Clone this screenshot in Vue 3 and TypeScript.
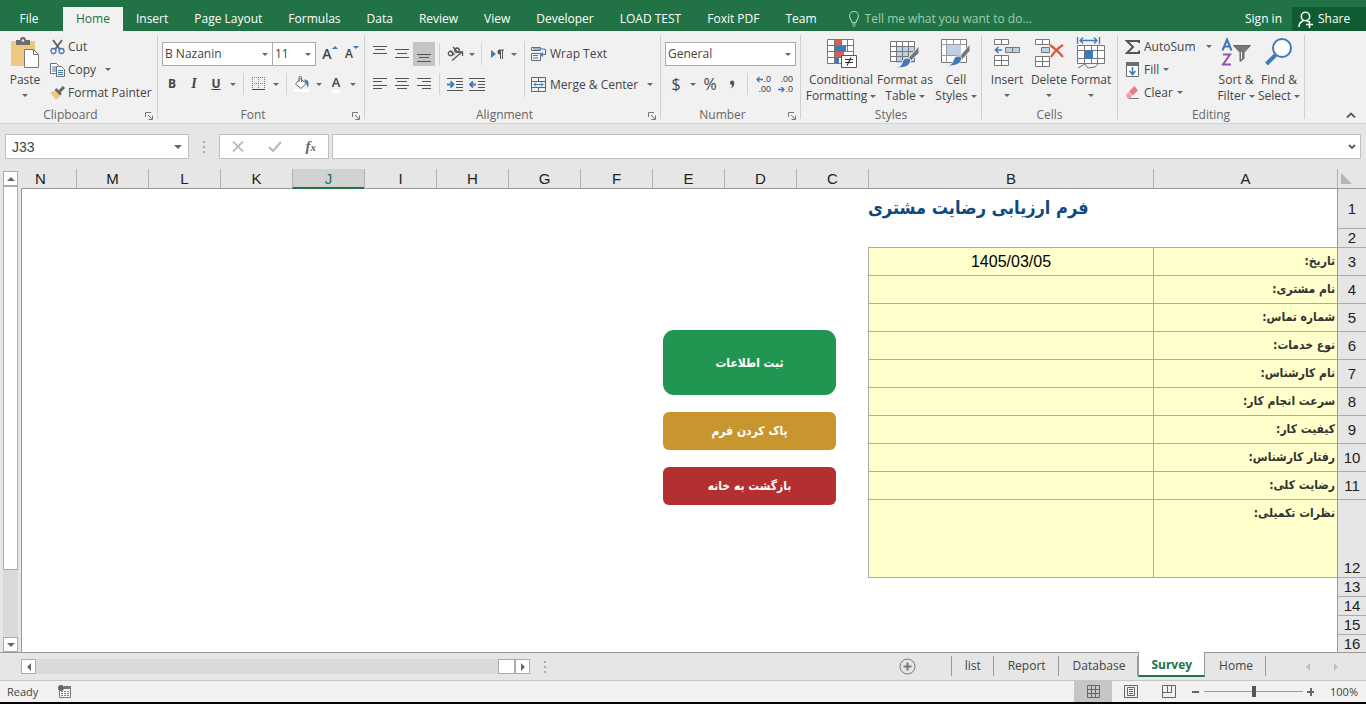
<script setup lang="ts">
import { ref } from 'vue'

const ribbonTabs = ['Home', 'Insert', 'Page Layout', 'Formulas', 'Data', 'Review', 'View', 'Developer', 'LOAD TEST', 'Foxit PDF', 'Team']
const activeTab = ref('Home')

const columns = ['A', 'B', 'C', 'D', 'E', 'F', 'G', 'H', 'I', 'J', 'K', 'L', 'M', 'N']
const emptyColumns = columns.slice(2)
const selectedColumn = ref('J')

interface FormRow {
  row: number
  label: string
  value: string
}

const formRows: FormRow[] = [
  { row: 3, label: 'تاریخ:', value: '1405/03/05' },
  { row: 4, label: 'نام مشتری:', value: '' },
  { row: 5, label: 'شماره تماس:', value: '' },
  { row: 6, label: 'نوع خدمات:', value: '' },
  { row: 7, label: 'نام کارشناس:', value: '' },
  { row: 8, label: 'سرعت انجام کار:', value: '' },
  { row: 9, label: 'کیفیت کار:', value: '' },
  { row: 10, label: 'رفتار کارشناس:', value: '' },
  { row: 11, label: 'رضایت کلی:', value: '' },
  { row: 12, label: 'نظرات تکمیلی:', value: '' },
]
const trailingRows = [13, 14, 15, 16]

const sheets = ['list', 'Report', 'Database', 'Survey', 'Home']
const activeSheet = ref('Survey')

const cellName = ref('J33')
const formula = ref('')
const zoom = ref(100)
</script>

<template>
  <div class="app">
    <header class="tabbar">
      <button class="file">File</button>
      <nav class="tabs">
        <button v-for="t in ribbonTabs" :key="t" class="tab" :class="{ active: t === activeTab }" @click="activeTab = t">{{ t }}</button>
      </nav>
      <label class="tell">
        <svg width="12" height="16" viewBox="0 0 12 16" fill="none" stroke="currentColor" stroke-width="1.2"><path d="M4 11.5C4 9 1.5 8 1.5 5a4.5 4.5 0 0 1 9 0C10.500 8 8 9 8 11.500zM4 13h4M4.500 15h3" /></svg>
        <input type="text" placeholder="Tell me what you want to do..." aria-label="Tell me what you want to do" />
      </label>
      <button class="signin">Sign in</button>
      <button class="share">
        <svg width="16" height="17" viewBox="0 0 16 17" fill="none" stroke="#fff" stroke-width="1.500"><circle cx="7.500" cy="5.500" r="4.200" /><path d="M1 16c0-3.500 2-5.500 4.500-6.500M9 9.800l1.500 1M8 13.500h7M11.500 10v7" /></svg>
        Share
      </button>
    </header>

    <section class="ribbon" aria-label="Ribbon">
      <div class="group g-clip">
        <div class="body">
          <button class="big paste">
            <svg width="30" height="32" viewBox="0 0 30 32"><path d="M1 4h24v25H1z" fill="#edc87e" /><path d="M6 3h4a3 3 0 0 1 6 0h4v5H6z" fill="#6d6d6d" /><circle cx="13" cy="3.500" r="1.300" fill="#f1f1f1" /><path d="M14.500 12.500h9l5 5v13h-14z" fill="#fff" stroke="#777" /><path d="M23.500 12.500v5h5" fill="none" stroke="#777" /></svg>
            <span>Paste</span><i class="caret"></i>
          </button>
          <div class="stack">
            <button class="line">
              <svg width="15" height="16" viewBox="0 0 15 16" fill="none"><path d="M3 1l7 9.500M12 1L5 10.500" stroke="#666" stroke-width="2" /><circle cx="3.500" cy="12" r="2.500" stroke="#3f79b8" stroke-width="1.300" /><circle cx="11.500" cy="12" r="2.500" stroke="#3f79b8" stroke-width="1.300" /></svg>
              Cut
            </button>
            <button class="line">
              <svg width="15" height="14" viewBox="0 0 15 14"><path d="M.5.5h6l2 2v8h-8z" fill="#fff" stroke="#6d6d6d" /><path d="M2 4h4M2 6h4M2 8h4" stroke="#3f79b8" /><path d="M6.500 3.500h5l3 3v7h-8z" fill="#fff" stroke="#6d6d6d" /><path d="M8 7.500h5M8 9.500h5M8 11.500h5" stroke="#3f79b8" /></svg>
              Copy <i class="caret far"></i>
            </button>
            <button class="line">
              <svg width="15" height="14" viewBox="0 0 15 14"><path d="M0 6.500l5.500-2 5 5L6 14z" fill="#edc87e" /><path d="M5.500 3l5.500 5.500" stroke="#666" stroke-width="2.500" /><path d="M9.500 5.500L14 1" stroke="#666" stroke-width="3" /></svg>
              Format Painter
            </button>
          </div>
        </div>
        <footer>Clipboard<button class="launch" aria-label="Clipboard settings"><svg width="8" height="8" viewBox="0 0 8 8" fill="none" stroke="#777"><path d="M.5 5V.5H6M3 3l4 4M7.500 3.500v4h-4" /></svg></button></footer>
      </div>

      <div class="group g-font">
        <div class="body rows">
          <div class="row">
            <span class="pick name"><select aria-label="Font"><option>B Nazanin</option></select><i class="caret"></i></span>
            <span class="pick size"><select aria-label="Font size"><option>11</option></select><i class="caret"></i></span>
            <button class="tool grow first" aria-label="Increase font size"><b class="a-lg">A</b><i class="up"></i></button>
            <button class="tool grow" aria-label="Decrease font size"><b class="a-sm">A</b><i class="up down"></i></button>
          </div>
          <div class="row">
            <button class="tool"><b>B</b></button>
            <button class="tool serif"><b><em>I</em></b></button>
            <button class="tool"><b><u>U</u></b></button>
            <button class="drop" aria-label="Underline options"><i class="caret"></i></button>
            <i class="sep"></i>
            <button class="tool" aria-label="Borders"><svg width="14" height="14" viewBox="0 0 14 14" fill="none" stroke="#777"><path d="M0 .5h13M0 6.500h13M.5 0v12M6.500 0v12M12.500 0v12" stroke-dasharray="1 1" /><path d="M0 12.500h13" stroke="#444" /></svg></button>
            <button class="drop" aria-label="Border options"><i class="caret"></i></button>
            <i class="sep"></i>
            <button class="tool" aria-label="Fill color"><svg width="16" height="16" viewBox="0 0 16 16"><path d="M6.500 2.500l5.500 5-5 5-5.500-4.500z" fill="#fff" stroke="#666" /><path d="M5 6V1.500a1.200 1.200 0 0 1 2.500 0V6" fill="none" stroke="#666" /><path d="M10 3.500c4.500 0 5.500 3 4 8-1-1-1-3-2-4z" fill="#3f79b8" /><path d="M0 13h15v3H0z" fill="#fff" /></svg></button>
            <button class="drop" aria-label="Fill options"><i class="caret"></i></button>
            <button class="tool fontcolor" aria-label="Font color"><b>A</b></button>
            <button class="drop" aria-label="Font color options"><i class="caret"></i></button>
          </div>
        </div>
        <footer>Font<button class="launch" aria-label="Font settings"><svg width="8" height="8" viewBox="0 0 8 8" fill="none" stroke="#777"><path d="M.5 5V.5H6M3 3l4 4M7.500 3.500v4h-4" /></svg></button></footer>
      </div>

      <div class="group g-align">
        <div class="body">
          <div class="rows">
            <div class="row">
              <button class="tool" aria-label="Top align"><svg width="14" height="16" viewBox="0 0 14 16" stroke="#555"><path d="M0 .5h14M2 3.500h10M0 7.500h14" /></svg></button>
              <button class="tool" aria-label="Middle align"><svg width="14" height="16" viewBox="0 0 14 16" stroke="#555"><path d="M0 3.500h14M2 7.500h10M0 11.500h14" /></svg></button>
              <button class="tool on" aria-label="Bottom align"><svg width="14" height="16" viewBox="0 0 14 16" stroke="#555"><path d="M0 8.500h14M2 11.500h10M0 15.500h14" /></svg></button>
              <i class="sep"></i>
              <button class="tool" aria-label="Orientation"><svg width="17" height="16" viewBox="0 0 17 16" fill="none" stroke="#555" stroke-width="1.300"><circle cx="3.500" cy="7.500" r="2.200" /><path d="M3.500 4.500l4 4.500M6 1l5 5.500" /><circle cx="10" cy="4.200" r="2.200" /><path d="M5 14.500L15 6M11 6h4.500v4" /></svg></button>
              <button class="drop" aria-label="Orientation options"><i class="caret"></i></button>
              <i class="sep"></i>
              <button class="tool" aria-label="Text direction"><svg width="13" height="10" viewBox="0 0 13 10"><path d="M0 1l5 4-5 4z" fill="#3f79b8" /><path d="M9 1h4M9.500 1v9M11.500 1v9" stroke="#555" /><path d="M9 .5a2.500 2.500 0 0 0 0 5z" fill="#555" /></svg></button>
              <button class="drop" aria-label="Text direction options"><i class="caret"></i></button>
            </div>
            <div class="row">
              <button class="tool" aria-label="Align left"><svg width="14" height="12" viewBox="0 0 14 12" stroke="#555"><path d="M0 .5h14M0 3.500h9M0 7.500h14M0 10.500h9" /></svg></button>
              <button class="tool" aria-label="Center"><svg width="14" height="12" viewBox="0 0 14 12" stroke="#555"><path d="M0 .5h14M2 3.500h10M0 7.500h14M2 10.500h10" /></svg></button>
              <button class="tool" aria-label="Align right"><svg width="14" height="12" viewBox="0 0 14 12" stroke="#555"><path d="M0 .5h14M5 3.500h9M0 7.500h14M5 10.500h9" /></svg></button>
              <i class="sep"></i>
              <button class="tool" aria-label="Decrease indent"><svg width="16" height="13" viewBox="0 0 16 13" stroke="#555"><path d="M0 .5h16M9 3.500h7M9 6.500h7M9 9.500h7M0 12.500h16" /><path d="M0 6.500h6M3.500 3.500l3 3-3 3" fill="none" stroke="#3f79b8" stroke-width="1.800" /></svg></button>
              <button class="tool" aria-label="Increase indent"><svg width="16" height="13" viewBox="0 0 16 13" stroke="#555"><path d="M0 .5h16M9 3.500h7M9 6.500h7M9 9.500h7M0 12.500h16" /><path d="M1.500 6.500H7M4 3.500l-3 3 3 3" fill="none" stroke="#3f79b8" stroke-width="1.800" /></svg></button>
            </div>
          </div>
          <i class="sep tall"></i>
          <div class="rows wraps">
            <button class="line"><svg width="16" height="16" viewBox="0 0 16 16" fill="none"><path d="M.5 1.500h9v3h-9zM.5 7.500h9v7h-9z" stroke="#6d6d6d" /><path d="M2 3h12M2 9.500h5M2 12h5M14.500 3v5.500H10M12 6.500l-2 2 2 2" stroke="#3f79b8" stroke-width="1.200" /></svg>Wrap Text</button>
            <button class="line"><svg width="16" height="16" viewBox="0 0 16 16" fill="none"><path d="M.5.5h14v14H.5zM.5 4.500h14M.5 10.500h14M7.500.5v4M7.500 10.500v4" stroke="#666" /><path d="M3 7.500h9M5 5.500l-2 2 2 2M10 5.500l2 2-2 2" stroke="#3f79b8" /></svg>Merge &amp; Center <i class="caret far"></i></button>
          </div>
        </div>
        <footer>Alignment<button class="launch" aria-label="Alignment settings"><svg width="8" height="8" viewBox="0 0 8 8" fill="none" stroke="#777"><path d="M.5 5V.5H6M3 3l4 4M7.500 3.500v4h-4" /></svg></button></footer>
      </div>

      <div class="group g-num">
        <div class="body rows">
          <div class="row">
            <span class="pick format"><select aria-label="Number format"><option>General</option></select><i class="caret"></i></span>
          </div>
          <div class="row">
            <button class="tool sym">$</button>
            <button class="drop" aria-label="Currency options"><i class="caret"></i></button>
            <button class="tool sym">%</button>
            <button class="tool sym comma" aria-label="Comma style"><svg width="6" height="9" viewBox="0 0 6 9"><path d="M1 8.500C3 7.500 3 6 3 5a2.200 2.200 0 1 1 2.300-2.500C5.500 5.500 4 8 1 8.500z" fill="#555" /></svg></button>
            <i class="sep"></i>
            <button class="tool dec" aria-label="Increase decimal"><span><svg width="7" height="7" viewBox="0 0 7 7" fill="none" stroke="#3f79b8" stroke-width="1.300"><path d="M7 3.500H1M3.500 1L1 3.500 3.500 6" /></svg>.0</span><span>.00</span></button>
            <button class="tool dec" aria-label="Decrease decimal"><span>.00</span><span><svg width="7" height="7" viewBox="0 0 7 7" fill="none" stroke="#3f79b8" stroke-width="1.300"><path d="M0 3.500h6M3.500 1L6 3.500 3.500 6" /></svg>.0</span></button>
          </div>
        </div>
        <footer>Number<button class="launch" aria-label="Number settings"><svg width="8" height="8" viewBox="0 0 8 8" fill="none" stroke="#777"><path d="M.5 5V.5H6M3 3l4 4M7.500 3.500v4h-4" /></svg></button></footer>
      </div>

      <div class="group g-styles">
        <div class="body">
          <button class="big cond">
            <svg width="31" height="32" viewBox="0 0 31 32"><path d="M1.500 2.500h26v24h-26z" fill="#fff" /><path d="M9 2h6v6H9zM9 14h9v6H9z" fill="#d8604a" /><path d="M9 8h11v6H9zM9 20h4v6H9z" fill="#3f79b8" /><path d="M1.500 2.500h26v24h-26zM8.500 2.500v24M15.500 2.500v6M21.500 2.500v12M1.500 8.500h26M1.500 14.500h26M1.500 20.500h26" fill="none" stroke="#777" /><path d="M15.500 18.500h15v12h-15z" fill="#fff" stroke="#555" /><path d="M19 22.500h8M19 25.500h8M25 20.500l-4 8" stroke="#333" stroke-width="1.200" /></svg>
            <span>Conditional</span><span>Formatting<i class="caret"></i></span>
          </button>
          <button class="big fmt">
            <svg width="30" height="32" viewBox="0 0 30 32"><path d="M.5 4.500h24v21H.5z" fill="#fff" /><path d="M6 9h19v17H6z" fill="#bdd0e6" /><path d="M.5 4.500h24v20H.5zM6.500 4.500v20M12.500 4.500v20M18.500 4.500v20M.5 9.500h24M.5 14.500h24M.5 19.500h24" fill="none" stroke="#777" /><path d="M29 9v7l-8 8-3-3z" fill="#777" stroke="#f1f1f1" /><path d="M17 21c3 0 4.500 2 3 5-2 4-7 5-14 5 4-1.500 5-2 6-5s2-5 5-5z" fill="#3f79b8" stroke="#f1f1f1" /></svg>
            <span>Format as</span><span>Table<i class="caret"></i></span>
          </button>
          <button class="big cell">
            <svg width="30" height="32" viewBox="0 0 30 32"><path d="M.5 2.500h25v23H.5z" fill="#fff" stroke="#777" /><path d="M.5 7.500h25M.5 18.500h25M5.500 2.500v23M19.500 2.500v5M12.500 2.500v5" stroke="#999" /><path d="M6 8h14v10H6z" fill="#bdd0e6" /><path d="M29 7v7l-8 9-3-3z" fill="#777" stroke="#f1f1f1" /><path d="M17 19c3 0 4.500 2 3 5-2 4-7 5-14 5 4-1.500 5-2 6-5s2-5 5-5z" fill="#3f79b8" stroke="#f1f1f1" /></svg>
            <span>Cell</span><span>Styles<i class="caret"></i></span>
          </button>
        </div>
        <footer>Styles</footer>
      </div>

      <div class="group g-cells">
        <div class="body">
          <button class="big">
            <svg width="28" height="32" viewBox="0 0 28 32"><path d="M1.500 2.500h14v5h-14zM8.500 2.500v5M1.500 18.500h14v10h-14zM8.500 18.500v10M1.500 23.500h14" fill="#fff" stroke="#777" /><path d="M12.500 10.500h14v5h-14zM19.500 10.500v5" fill="#bdd0e6" stroke="#777" /><path d="M9 13H3M5.500 10L2.500 13l3 3" fill="none" stroke="#3f79b8" stroke-width="1.600" /></svg>
            <span>Insert</span><i class="caret"></i>
          </button>
          <button class="big">
            <svg width="30" height="32" viewBox="0 0 30 32"><path d="M1.500 2.500h14v5h-14zM8.500 2.500v5M1.500 19.500h14v10h-14zM8.500 19.500v10M1.500 24.500h14" fill="#fff" stroke="#777" /><path d="M7.500 10.500h8v5h-8z" fill="#bdd0e6" stroke="#777" /><path d="M16 8c4 3 9 7 13 12M29 8c-5 3-9 7-12 12" fill="none" stroke="#dc5a3c" stroke-width="2.200" /></svg>
            <span>Delete</span><i class="caret"></i>
          </button>
          <button class="big">
            <svg width="30" height="32" viewBox="0 0 30 32"><path d="M2.500 8.500h26v18h-26z" fill="#fff" /><path d="M1.500 8.500h27v18h-27zM8.500 8.500v18M15.500 8.500v18M21.500 8.500v18M1.500 13.500h27M1.500 21.500h27M2 31l7-4 3 4 7-1 3-3" fill="none" stroke="#777" /><path d="M9 13h8v9H9z" fill="#3f79b8" /><path d="M1.500 0v7M23.500 0v7M4 3.500h17M7 .5l-3 3 3 3M18 .5l3 3-3 3" fill="none" stroke="#3f79b8" stroke-width="1.300" /></svg>
            <span>Format</span><i class="caret"></i>
          </button>
        </div>
        <footer>Cells</footer>
      </div>

      <div class="group g-edit">
        <div class="body">
          <div class="stack">
            <button class="line"><svg width="15" height="16" viewBox="0 0 15 16" fill="none" stroke="#555" stroke-width="2"><path d="M14 4V2H2l6 6-6 6h12v-2.500" /></svg>AutoSum <i class="caret far"></i></button>
            <button class="line"><svg width="15" height="15" viewBox="0 0 15 15"><path d="M1.500.5h12v14h-12z" fill="#fff" stroke="#6d6d6d" /><path d="M1 0h13v4H1z" fill="#6d6d6d" /><path d="M7.500 5v7M4.500 9l3 3.500 3-3.500" fill="none" stroke="#3f79b8" stroke-width="1.600" /></svg>Fill<i class="caret"></i></button>
            <button class="line"><svg width="15" height="14" viewBox="0 0 15 14"><path d="M9.500 0L13 4.500 7.500 9.500 4 5.500z" fill="#e8788a" /><path d="M3.500 6L7 10l-2.500 2.500H2.500L1 9z" fill="#ee9aa8" /><path d="M4 12.500h10" stroke="#777" /></svg>Clear<i class="caret"></i></button>
          </div>
          <button class="big sort">
            <svg width="30" height="32" viewBox="0 0 30 32" fill="none"><path d="M1.500 13.500L6 2.500l4.500 11M3 9.500h6" stroke="#3f79b8" stroke-width="2" /><path d="M2 17.500h7L2 27.500h8" stroke="#9254b4" stroke-width="2" /><path d="M12.500 8.500h17l-6.500 7v6l-4 3v-9z" fill="#777" stroke="#666" /><path d="M20.500 15v7" stroke="#fff" /></svg>
            <span>Sort &amp;</span><span>Filter<i class="caret"></i></span>
          </button>
          <button class="big find">
            <svg width="28" height="32" viewBox="0 0 28 32"><path d="M1.500 27l9-9" stroke="#3f79b8" stroke-width="4" /><circle cx="17" cy="11" r="9" fill="#fff" stroke="#3f79b8" stroke-width="2" /></svg>
            <span>Find &amp;</span><span>Select<i class="caret"></i></span>
          </button>
        </div>
        <footer>Editing</footer>
      </div>
      <button class="collapse" aria-label="Collapse the ribbon"><svg width="10" height="6" viewBox="0 0 10 6" fill="none" stroke="#555" stroke-width="1.800"><path d="M1 5.500l4-4 4 4" /></svg></button>
    </section>

    <section class="formulabar">
      <div class="namebox"><input v-model="cellName" aria-label="Name box" /><button aria-label="Names"><i class="caret"></i></button></div>
      <i class="dots"></i>
      <div class="fxbox">
        <button aria-label="Cancel"><svg width="12" height="11" viewBox="0 0 12 11" stroke="#bbb" stroke-width="1.800"><path d="M1 .5l10 10M11 .5l-10 10" /></svg></button>
        <button aria-label="Enter"><svg width="14" height="11" viewBox="0 0 14 11" fill="none" stroke="#bbb" stroke-width="2.200"><path d="M1 6l4 4 8-9" /></svg></button>
        <button class="fx" aria-label="Insert function"><em>f</em><small>x</small></button>
      </div>
      <div class="formula"><input v-model="formula" aria-label="Formula" /><button aria-label="Expand formula bar"><svg width="8" height="6" viewBox="0 0 8 6" fill="none" stroke="#555" stroke-width="1.800"><path d="M1 1l3 3 3-3" /></svg></button></div>
    </section>

    <main class="work">
      <div class="vscroll">
        <button aria-label="Scroll up"><i class="arrow up-a"></i></button>
        <div class="thumb"></div>
        <div class="track"></div>
        <button aria-label="Scroll down"><i class="arrow down-a"></i></button>
      </div>
      <div class="sheet" dir="rtl">
        <table>
          <colgroup>
            <col class="c-num" /><col class="c-a" /><col class="c-b" /><col v-for="c in emptyColumns" :key="c" class="c-std" />
          </colgroup>
          <thead>
            <tr>
              <th class="corner"><i></i></th>
              <th v-for="c in columns" :key="c" :class="{ selected: c === selectedColumn }" @click="selectedColumn = c">{{ c }}</th>
            </tr>
          </thead>
          <tbody>
            <tr class="r1"><th>1</th><td></td><td class="title">فرم ارزیابی رضایت مشتری</td></tr>
            <tr class="r2"><th>2</th></tr>
            <tr v-for="r in formRows" :key="r.row" :class="r.row === 12 ? 'notes' : 'entry'">
              <th>{{ r.row }}</th>
              <td class="field label">{{ r.label }}</td>
              <td class="field value">{{ r.value }}</td>
            </tr>
            <tr v-for="n in trailingRows" :key="n" class="r2"><th>{{ n }}</th></tr>
          </tbody>
        </table>
        <div class="actions">
          <button class="save">ثبت اطلاعات</button>
          <button class="clear">پاک کردن فرم</button>
          <button class="home">بازگشت به خانه</button>
        </div>
      </div>
    </main>

    <div class="sheetbar">
      <div class="hscroll">
        <button aria-label="Scroll left"><i class="arrow left-a"></i></button>
        <div class="track"></div>
        <div class="thumb"></div>
        <button aria-label="Scroll right"><i class="arrow right-a"></i></button>
      </div>
      <i class="dots"></i>
      <button class="add" aria-label="New sheet"><svg width="17" height="17" viewBox="0 0 17 17" fill="none" stroke="#777"><circle cx="8.500" cy="8.500" r="7.500" /><path d="M4.500 8.500h8M8.500 4.500v8" stroke-width="2" /></svg></button>
      <nav class="sheets">
        <button v-for="s in sheets" :key="s" :class="{ active: s === activeSheet }" @click="activeSheet = s">{{ s }}</button>
      </nav>
      <div class="nav">
        <button aria-label="Previous sheets"><i class="arrow left-a"></i></button>
        <button aria-label="Next sheets"><i class="arrow right-a"></i></button>
      </div>
    </div>

    <footer class="status">
      <span>Ready</span>
      <button class="macro" aria-label="Record macro"><svg width="13" height="13" viewBox="0 0 13 13"><path d="M1.500 3.500h11v9h-11z" fill="#fff" stroke="#777" /><path d="M6 1h7v3H6z" fill="#777" /><path d="M3 6.500h8M3 8.500h8M3 10.500h8" stroke="#777" stroke-dasharray="2 1" /><circle cx="3" cy="3" r="3" fill="#666" /></svg></button>
      <div class="views">
        <button class="on" aria-label="Normal view"><svg width="13" height="13" viewBox="0 0 13 13" fill="none" stroke="#666"><path d="M.5.5h12v12H.5zM4.500.5v12M8.500.5v12M.5 4.500h12M.5 8.500h12" /></svg></button>
        <button aria-label="Page layout view"><svg width="14" height="13" viewBox="0 0 14 13" fill="none" stroke="#666"><path d="M.5.5h13v12H.5zM3.500 2.500h7v8h-7zM5 4.500h4M5 6.500h4M5 8.500h4" /></svg></button>
        <button aria-label="Page break view"><svg width="14" height="13" viewBox="0 0 14 13" fill="none" stroke="#666"><path d="M.5.500h13v12H.5zM.5 7.500h9v-7M5.500.5v7" /></svg></button>
      </div>
      <button class="pm" aria-label="Zoom out"><i class="minus"></i></button>
      <input v-model.number="zoom" class="zoom" type="range" min="0" max="200" aria-label="Zoom" />
      <button class="pm" aria-label="Zoom in"><i class="minus plus"></i></button>
      <span class="pct">{{ zoom }}%</span>
    </footer>
  </div>
</template>

<style>
html, body { margin: 0; background: #000; }
</style>

<style scoped>
* { box-sizing: border-box; }
.app {
  display: flex;
  flex-direction: column;
  height: 100vh;
  padding-bottom: 2px;
  overflow: hidden;
  font-family: "Open Sans", "Noto Sans", sans-serif;
  font-size: 12px;
  line-height: 16px;
  color: #444;
  background: #010103;
}
button, input, select { font: inherit; color: inherit; background: none; border: 0; padding: 0; margin: 0; border-radius: 0; outline: 0; }
button { white-space: nowrap; }
svg { display: block; flex: none; }

.tabbar { display: flex; align-items: flex-end; flex: none; height: 31px; background: #217346; color: #fff; }
.tabbar button { height: 24px; }
.file { width: 58px; }
.tabs { display: flex; margin-left: 5px; }
.tab { padding: 0 13px; }
.tab.active { background: #f1f1f1; color: #217346; }
.tell { display: flex; align-items: center; gap: 5px; height: 24px; margin-left: 18px; color: #9fcdb2; }
.tell input { width: 180px; }
.tell input::placeholder { color: #9fcdb2; opacity: 1; }
.signin { margin-left: auto; padding: 0 10px; }
.share { display: flex; align-items: center; gap: 4px; width: 74px; padding-left: 6px; background: #0e5c2f; }

.ribbon { display: flex; flex: none; height: 93px; background: #f1f1f1; border-bottom: 1px solid #d2d2d2; }
.group { position: relative; display: flex; flex-direction: column; flex: none; margin: 4px 0; border-right: 1px solid #d0d0d0; }
.body { display: flex; flex: 1; min-height: 0; }
.group footer { position: relative; height: 8px; line-height: 8px; text-align: center; color: #666; padding-right: 16px; }
.g-styles footer, .g-cells footer, .g-edit footer { padding-right: 0; }
.launch { position: absolute; right: 4px; top: 1px; }
.g-clip { width: 158px; }
.g-font { width: 207px; }
.g-align { width: 296px; }
.g-num { width: 140px; }
.g-styles { width: 181px; }
.g-cells { width: 136px; }
.g-edit { width: 187px; }
.big { display: flex; flex-direction: column; align-items: center; justify-content: flex-start; height: 74px; padding-top: 2px; }
.big svg { margin-bottom: 3px; }
.big > .caret { margin-top: 6px; }
.big span .caret { margin-left: 3px; }
.caret { display: inline-block; flex: none; width: 0; height: 0; border: 3px solid transparent; border-top-color: #666; border-bottom: 0; vertical-align: middle; }
.paste { width: 40px; margin-left: 5px; }
.stack { display: flex; flex-direction: column; margin-left: 5px; }
.line { display: flex; align-items: center; gap: 3px; height: 23px; }
.line .far { margin-left: 6px; }
.rows { display: flex; flex-direction: column; }
.row { display: flex; align-items: center; height: 24px; margin-top: 6px; }
.row:first-child { margin-top: 7px; }
.g-font .row, .g-num .row { padding-left: 4px; }
.g-font .row + .row { padding-left: 3px; }
.pick { display: grid; align-items: center; height: 24px; background: #fff; border: 1px solid #ababab; }
.pick select, .pick .caret { grid-area: 1 / 1; }
.pick select { appearance: none; width: 100%; padding-left: 2px; }
.pick .caret { justify-self: end; margin-right: 4px; pointer-events: none; }
.name { width: 111px; }
.size { width: 43px; border-left: 0; }
.format { width: 131px; }
.tool { display: flex; align-items: center; justify-content: center; flex: none; width: 22px; height: 24px; font-size: 12px; color: #444; }
.tool.on { background: #c5c5c5; }
.serif { font-family: "Liberation Serif", serif; font-size: 14px; }
.drop { display: flex; align-items: center; justify-content: center; width: 12px; height: 22px; }
.g-align .drop { width: 11px; }
.sep { flex: none; width: 1px; height: 22px; margin: 0 4px; background: #d2d2d2; }
.sep.tall { height: 56px; margin: 6px 6px 0 5px; }
.first { margin-left: 3px; }
.a-lg { font-size: 14px; font-weight: 600; }
.a-sm { font-size: 12px; font-weight: 600; }
.up { align-self: flex-start; margin-top: 4px; border: 3px solid transparent; border-top: 0; border-bottom: 3px solid #3f79b8; }
.up.down { border-bottom: 0; border-top: 3px solid #3f79b8; }
.fontcolor b { line-height: 15px; font-size: 13px; font-weight: 600; border-bottom: 3px solid #fff; }
.g-align .rows:first-child { padding-left: 4px; }
.wraps { padding-top: 7px; gap: 8px; }
.g-num .sym { font-size: 16px; }
.dec { flex-direction: column; align-items: flex-end; font: 9px/10px "Liberation Sans", sans-serif; padding-right: 3px; }
.dec span { display: flex; align-items: center; height: 10px; }
.cond { width: 72px; margin-left: 4px; }
.fmt { width: 56px; }
.cell { width: 46px; }
.g-cells .big { width: 42px; }
.g-cells .body { padding-left: 4px; }
.g-edit .stack { width: 92px; margin-left: 7px; }
.g-edit .line { gap: 4px; }
.sort { width: 38px; }
.find { width: 48px; }
.collapse { align-self: flex-end; margin: 0 10px 5px auto; }

.formulabar { display: flex; align-items: center; flex: none; height: 45px; padding: 0 5px; background: #e6e6e6; }
.namebox, .formula, .fxbox { display: flex; align-items: center; height: 25px; background: #fff; border: 1px solid #c0c0c0; }
.namebox { width: 184px; padding: 0 6px; font: 14px "Liberation Sans", sans-serif; }
.namebox input, .formula input { flex: 1; min-width: 0; }
.namebox .caret { border-width: 4px 4px 0; display: block; }
.dots { width: 2px; height: 12px; margin: 0 14px; background: repeating-linear-gradient(#aaa 0 2px, transparent 2px 5px); }
.fxbox { width: 110px; justify-content: space-around; margin-right: 3px; }
.fx { font: bold 15px/20px "Liberation Serif", serif; color: #666; }
.fx small { font-size: 11px; font-style: italic; }
.formula { flex: 1; padding: 0 4px; }

.work { display: flex; flex: 1; min-height: 0; background: #e6e6e6; }
.vscroll { display: flex; flex-direction: column; flex: none; width: 15px; margin: 2px 3px 0; }
.vscroll button, .hscroll button { display: flex; align-items: center; justify-content: center; flex: none; width: 15px; height: 15px; background: #fff; border: 1px solid #ababab; }
.thumb { background: #fff; border: 1px solid #ababab; }
.vscroll .thumb { flex: 384; }
.track { background: #dadada; }
.vscroll .track { flex: 67; }
.arrow { width: 0; height: 0; border: 4px solid transparent; }
.up-a { border-top: 0; border-bottom-color: #666; }
.down-a { border-bottom: 0; border-top-color: #666; }
.left-a { border-left: 0; border-right-color: #666; }
.right-a { border-right: 0; border-left-color: #666; }
.sheet { position: relative; flex: 1; min-width: 0; overflow: hidden; background: linear-gradient(#e6e6e6 19px, #999 19px 20px, #fff 20px); }
.sheet::after { content: ""; position: absolute; left: 0; top: 19px; bottom: 0; width: 1px; background: #999; }
table { table-layout: fixed; width: 1362px; border-collapse: separate; border-spacing: 0; font: 15px/18px "Liberation Sans", sans-serif; color: #222; }
.c-num { width: 29px; }
.c-a { width: 184px; }
.c-b { width: 285px; }
.c-std { width: 72px; }
th, td { padding: 0; font-weight: 400; }
thead th { height: 20px; border-left: 1px solid #b0b0b0; border-bottom: 1px solid #999; background: #e6e6e6; }
thead th.selected { background: #d2d2d2; color: #217346; border-bottom: 2px solid #217346; line-height: 17px; }
thead .corner i { display: block; width: 0; height: 0; margin-right: 14px; border-bottom: 11px solid #b4b4b4; border-right: 11px solid transparent; }
tbody th { background: #e6e6e6; border-left: 1px solid #999; border-bottom: 1px solid #ababab; }
.r1 { height: 40px; }
.r2 { height: 19px; }
.entry { height: 28px; }
.notes { height: 78px; }
.notes th { vertical-align: bottom; }
.field { background: #ffffcc; border-left: 1px solid #ababab; border-bottom: 1px solid #ababab; box-shadow: 0 -1px #ababab; }
.label { padding-right: 2px; font: bold 12px/26px "DejaVu Sans Condensed", "DejaVu Sans", sans-serif; vertical-align: top; text-align: right; color: #333; }
.value { font-size: 16px; color: #000; text-align: center; }
.title { font: bold 18px/38px "DejaVu Sans Condensed", "DejaVu Sans", sans-serif; color: #0f4a7f; text-align: left; white-space: nowrap; vertical-align: top; }
.actions { position: absolute; top: 161px; right: 530px; display: flex; flex-direction: column; gap: 17px; width: 173px; }
.actions button { height: 38px; border-radius: 6px; color: #fff; font: bold 12px/20px "DejaVu Sans Condensed", "DejaVu Sans", sans-serif; }
.actions .save { height: 65px; border-radius: 11px; background: #219653; }
.actions .clear { background: #c8962f; }
.actions .home { background: #b43030; }

.sheetbar { display: flex; align-items: center; flex: none; height: 29px; padding-left: 21px; background: #e6e6e6; border-top: 1px solid #999; border-bottom: 1px solid #c6c6c6; }
.hscroll { display: flex; flex: 0 1 509px; height: 15px; }
.hscroll .track { flex: 1; }
.hscroll .thumb { width: 17px; }
.add { margin-left: auto; }
.sheets { display: flex; align-self: stretch; margin-left: 35px; }
.sheets button { position: relative; height: 25px; padding: 0 13px 0 14px; }
.sheets button::after, .sheets button:first-child::before { content: ""; position: absolute; right: 0; top: 3px; height: 20px; width: 1px; background: #999; }
.sheets button:first-child::before { right: auto; left: 0; }
.sheets .active { margin-top: -1px; padding: 2px 12px 0; background: #fff; color: #217346; font-weight: 700; border: 1px solid #999; border-top: 0; border-bottom: 2px solid #217346; }
.sheets .active::after { display: none; }
.nav { display: flex; gap: 24px; margin: 0 28px 0 40px; }
.nav .arrow { display: block; opacity: .3; }

.status { display: flex; align-items: center; flex: none; height: 21px; padding: 0 8px 0 7px; background: #f1f1f1; font-size: 11px; }
.macro { margin-left: 20px; }
.views { display: flex; align-self: stretch; margin-left: auto; }
.views button { display: flex; align-items: center; justify-content: center; width: 38px; }
.views .on { background: #c6c6c6; }
.pm { margin: 0 4px; width: 8px; }
.minus { position: relative; display: block; width: 7px; height: 2px; background: #666; }
.plus::after { content: ""; position: absolute; left: 3px; top: -3px; width: 2px; height: 8px; background: #666; }
.zoom { appearance: none; width: 99px; height: 12px; background: linear-gradient(#999, #999) center / 100% 1px no-repeat; }
.zoom::-webkit-slider-thumb { appearance: none; width: 4px; height: 11px; background: #555; }
.pct { margin-left: 11px; }
</style>
